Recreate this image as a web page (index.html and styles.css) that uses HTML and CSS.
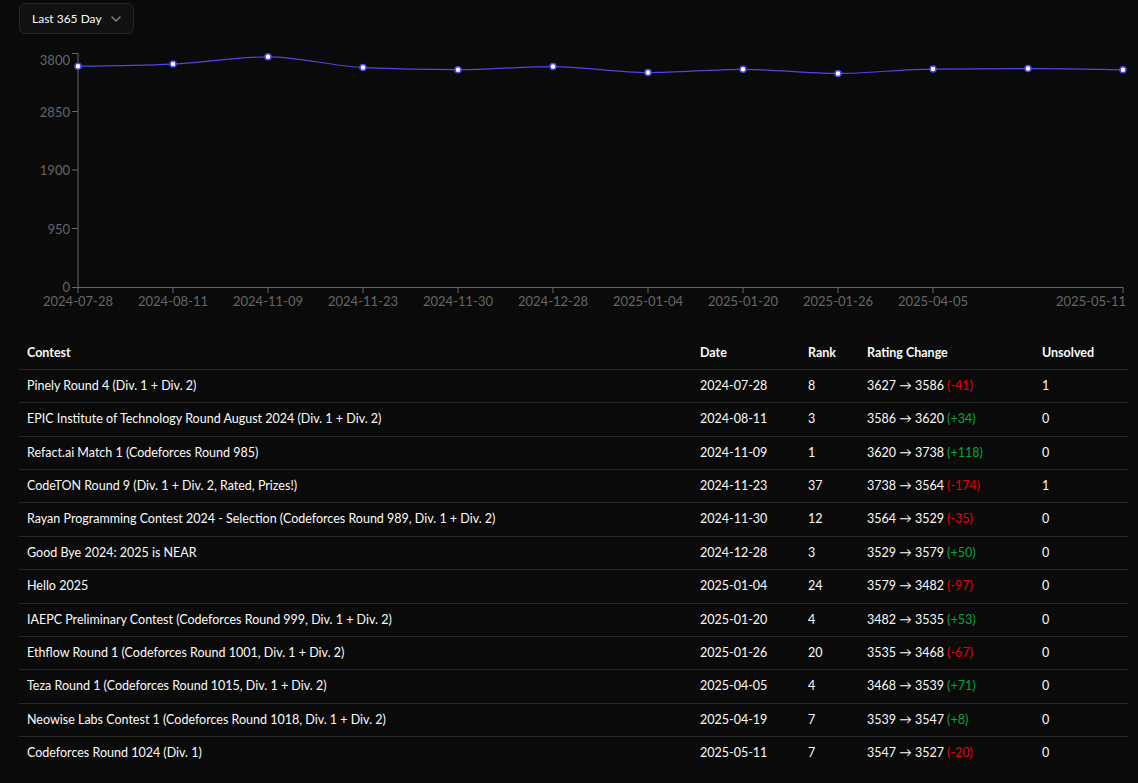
FILE: index.html
```html
<!DOCTYPE html>
<html lang="en">
<head>
<meta charset="utf-8">
<title>Rating history</title>
<link rel="stylesheet" href="styles.css">
</head>
<body>
<main class="page">
  <button class="select" type="button">
    <span class="select-label">Last 365 Day</span>
    <svg class="chev" width="16" height="16" viewBox="0 0 24 24" fill="none" stroke="currentColor" stroke-width="2" stroke-linecap="round" stroke-linejoin="round"><path d="m6 9 6 6 6-6"/></svg>
  </button>

  <svg class="chart" width="1109" height="285" viewBox="19 40 1109 285">
    <g class="axis">
      <line x1="78" y1="53" x2="78" y2="287.5"/>
      <line x1="78" y1="287.5" x2="1123" y2="287.5"/>
      <line x1="72" y1="53.5" x2="78" y2="53.5"/>
      <line x1="72" y1="111.5" x2="78" y2="111.5"/>
      <line x1="72" y1="170" x2="78" y2="170"/>
      <line x1="72" y1="228.5" x2="78" y2="228.5"/>
      <line x1="72" y1="287.5" x2="78" y2="287.5"/>
      <line x1="78" y1="287" x2="78" y2="293"/>
      <line x1="173" y1="287" x2="173" y2="293"/>
      <line x1="268" y1="287" x2="268" y2="293"/>
      <line x1="363" y1="287" x2="363" y2="293"/>
      <line x1="458" y1="287" x2="458" y2="293"/>
      <line x1="553" y1="287" x2="553" y2="293"/>
      <line x1="648" y1="287" x2="648" y2="293"/>
      <line x1="743" y1="287" x2="743" y2="293"/>
      <line x1="838" y1="287" x2="838" y2="293"/>
      <line x1="933" y1="287" x2="933" y2="293"/>
      <line x1="1123" y1="287" x2="1123" y2="293"/>
    </g>
    <g class="ylab">
      <text x="70" y="65">3800</text>
      <text x="70" y="116.5">2850</text>
      <text x="70" y="175">1900</text>
      <text x="70" y="233.5">950</text>
      <text x="70" y="291.5">0</text>
    </g>
    <g class="xlab">
      <text x="78" y="305.5">2024-07-28</text>
      <text x="173" y="305.5">2024-08-11</text>
      <text x="268" y="305.5">2024-11-09</text>
      <text x="363" y="305.5">2024-11-23</text>
      <text x="458" y="305.5">2024-11-30</text>
      <text x="553" y="305.5">2024-12-28</text>
      <text x="648" y="305.5">2025-01-04</text>
      <text x="743" y="305.5">2025-01-20</text>
      <text x="838" y="305.5">2025-01-26</text>
      <text x="933" y="305.5">2025-04-05</text>
      <text class="end" x="1126" y="305.5">2025-05-11</text>
    </g>
    <path class="line" d="M78,66.18 C109.67,65.83 141.33,65.48 173,64.08 C204.67,62.68 236.33,56.82 268,56.82 C299.67,56.82 331.33,66.09 363,67.53 C394.67,68.97 426.33,69.69 458,69.69 C489.67,69.69 521.33,66.61 553,66.61 C584.67,66.61 616.33,72.58 648,72.58 C679.67,72.58 711.33,69.32 743,69.32 C774.67,69.32 806.33,73.44 838,73.44 C869.67,73.44 901.33,69.07 933,69.07 C964.67,69.07 996.33,68.91 1028,68.58 C1059.67,68.25 1091.33,69.2 1123,69.81"/>
    <g class="dots">
      <circle cx="78" cy="66.18" r="3"/>
      <circle cx="173" cy="64.08" r="3"/>
      <circle cx="268" cy="56.82" r="3"/>
      <circle cx="363" cy="67.53" r="3"/>
      <circle cx="458" cy="69.69" r="3"/>
      <circle cx="553" cy="66.61" r="3"/>
      <circle cx="648" cy="72.58" r="3"/>
      <circle cx="743" cy="69.32" r="3"/>
      <circle cx="838" cy="73.44" r="3"/>
      <circle cx="933" cy="69.07" r="3"/>
      <circle cx="1028" cy="68.58" r="3"/>
      <circle cx="1123" cy="69.81" r="3"/>
    </g>
  </svg>

  <table class="table">
    <colgroup>
      <col class="c-contest"><col class="c-date"><col class="c-rank"><col class="c-rating"><col class="c-uns">
    </colgroup>
    <thead>
      <tr><th>Contest</th><th>Date</th><th>Rank</th><th>Rating Change</th><th>Unsolved</th></tr>
    </thead>
    <tbody>
      <tr><td>Pinely Round 4 (Div. 1 + Div. 2)</td><td>2024-07-28</td><td>8</td><td>3627 → 3586 <span class="neg">(-41)</span></td><td>1</td></tr>
      <tr><td>EPIC Institute of Technology Round August 2024 (Div. 1 + Div. 2)</td><td>2024-08-11</td><td>3</td><td>3586 → 3620 <span class="pos">(+34)</span></td><td>0</td></tr>
      <tr><td>Refact.ai Match 1 (Codeforces Round 985)</td><td>2024-11-09</td><td>1</td><td>3620 → 3738 <span class="pos">(+118)</span></td><td>0</td></tr>
      <tr><td>CodeTON Round 9 (Div. 1 + Div. 2, Rated, Prizes!)</td><td>2024-11-23</td><td>37</td><td>3738 → 3564 <span class="neg">(-174)</span></td><td>1</td></tr>
      <tr><td>Rayan Programming Contest 2024 - Selection (Codeforces Round 989, Div. 1 + Div. 2)</td><td>2024-11-30</td><td>12</td><td>3564 → 3529 <span class="neg">(-35)</span></td><td>0</td></tr>
      <tr><td>Good Bye 2024: 2025 is NEAR</td><td>2024-12-28</td><td>3</td><td>3529 → 3579 <span class="pos">(+50)</span></td><td>0</td></tr>
      <tr><td>Hello 2025</td><td>2025-01-04</td><td>24</td><td>3579 → 3482 <span class="neg">(-97)</span></td><td>0</td></tr>
      <tr><td>IAEPC Preliminary Contest (Codeforces Round 999, Div. 1 + Div. 2)</td><td>2025-01-20</td><td>4</td><td>3482 → 3535 <span class="pos">(+53)</span></td><td>0</td></tr>
      <tr><td>Ethflow Round 1 (Codeforces Round 1001, Div. 1 + Div. 2)</td><td>2025-01-26</td><td>20</td><td>3535 → 3468 <span class="neg">(-67)</span></td><td>0</td></tr>
      <tr><td>Teza Round 1 (Codeforces Round 1015, Div. 1 + Div. 2)</td><td>2025-04-05</td><td>4</td><td>3468 → 3539 <span class="pos">(+71)</span></td><td>0</td></tr>
      <tr><td>Neowise Labs Contest 1 (Codeforces Round 1018, Div. 1 + Div. 2)</td><td>2025-04-19</td><td>7</td><td>3539 → 3547 <span class="pos">(+8)</span></td><td>0</td></tr>
      <tr><td>Codeforces Round 1024 (Div. 1)</td><td>2025-05-11</td><td>7</td><td>3547 → 3527 <span class="neg">(-20)</span></td><td>0</td></tr>
    </tbody>
  </table>
</main>
</body>
</html>
```
FILE: styles.css
```css
html, body {
  margin: 0;
  background: #0a0a0a;
  color: #fafafa;
  font-family: Lato, "Liberation Sans", sans-serif;
}

.page {
  padding: 3px 10px 0 19px;
  display: flex;
  flex-direction: column;
  align-items: flex-start;
}

.select {
  display: flex;
  align-items: center;
  gap: 6px;
  height: 31px;
  box-sizing: border-box;
  padding: 0 9px 0 12px;
  background: #111111;
  border: 1px solid #262626;
  border-radius: 6px;
  color: #fafafa;
  font-family: Lato, "Liberation Sans", sans-serif;
  font-size: 12px;
  white-space: nowrap;
}

.select-label {
  white-space: nowrap;
}

.chev {
  color: #fafafa;
  opacity: 0.5;
  flex: none;
}

.chart {
  display: block;
  margin-top: 6px;
}

.axis line {
  stroke: #666666;
  stroke-width: 1;
}

.ylab text {
  fill: #666666;
  font-family: Lato, "Liberation Sans", sans-serif;
  font-size: 13px;
  text-anchor: end;
}

.xlab text {
  fill: #666666;
  font-family: Lato, "Liberation Sans", sans-serif;
  font-size: 13px;
  text-anchor: middle;
}

.xlab text.end {
  text-anchor: end;
}

.line {
  fill: none;
  stroke: #4f46e5;
  stroke-width: 1.2;
}

.dots circle {
  fill: #ffffff;
  stroke: #4f46e5;
  stroke-width: 1.5;
}

.table {
  margin-top: 12px;
  width: 1109px;
  border-collapse: collapse;
  table-layout: fixed;
  font-size: 12.5px;
}

.c-contest { width: 673px; }
.c-date { width: 108px; }
.c-rank { width: 59px; }
.c-rating { width: 175px; }
.c-uns { width: 94px; }

.table th,
.table td {
  text-align: left;
  padding: 8px;
  line-height: 16.36px;
  white-space: nowrap;
}

.table th {
  font-weight: 700;
  line-height: 16px;
}

.table thead tr,
.table tbody tr {
  border-bottom: 1px solid #262626;
}

.table tbody tr:last-child {
  border-bottom: none;
}

.neg { color: #e7000b; }
.pos { color: #00a63e; }
```
